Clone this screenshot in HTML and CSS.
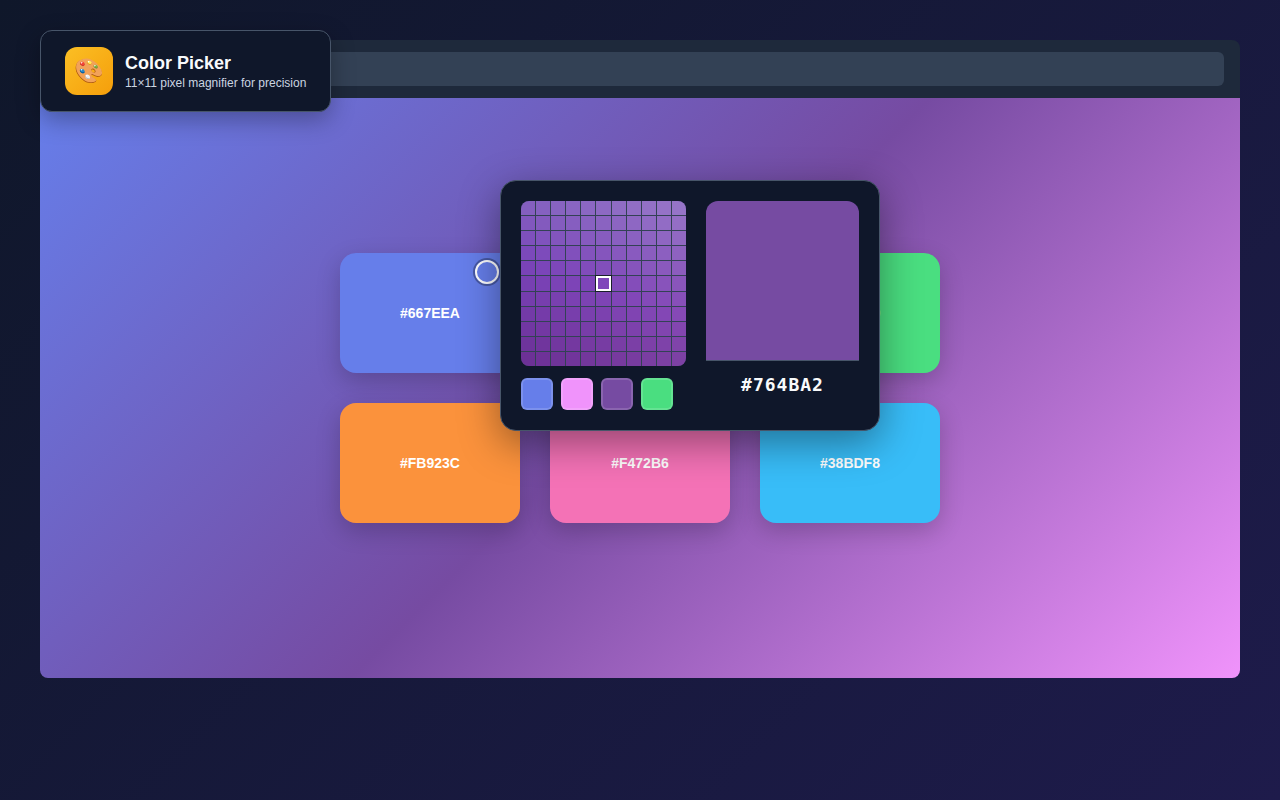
FILE: index.html
```html
<!DOCTYPE html>
<html lang="en">
<head>
    <meta charset="UTF-8">
    <meta name="viewport" content="width=device-width, initial-scale=1.0">
    <title>Color Picker</title>
    <link rel="stylesheet" href="styles.css">
</head>
<body>

    <main class="browser">
        <div class="toolbar">
            <input class="address-bar" type="text" aria-label="Address">
        </div>
        <div class="content">
            <div class="color-grid">
                <div class="color-box blue">#667EEA</div>
                <div class="color-box pink">#F093FB</div>
                <div class="color-box green">#4ADE80</div>
                <div class="color-box orange">#FB923C</div>
                <div class="color-box rose">#F472B6</div>
                <div class="color-box sky">#38BDF8</div>
            </div>
        </div>
    </main>

    <header class="label">
        <div class="label-icon">🎨</div>
        <div>
            <h1>Color Picker</h1>
            <p>11×11 pixel magnifier for precision</p>
        </div>
    </header>

    <div class="cursor"></div>

    <section class="picker">
        <div class="picker-left">
            <div class="magnifier" id="magnifier"></div>
            <div class="history">
                <button class="swatch blue" aria-label="#667EEA"></button>
                <button class="swatch pink" aria-label="#F093FB"></button>
                <button class="swatch purple" aria-label="#764BA2"></button>
                <button class="swatch green" aria-label="#4ADE80"></button>
            </div>
        </div>
        <div class="preview">
            <div class="preview-color"></div>
            <div class="preview-hex">#764BA2</div>
        </div>
    </section>

    <script>
        const magnifier = document.getElementById("magnifier");
        const size = 11;

        for (let y = 0; y < size; y++) {
            for (let x = 0; x < size; x++) {
                const pixel = document.createElement("div");
                const h = 263 + y * 1.2 + x * 0.15;
                const s = 43 + y * 0.8 - x * y * 0.08;
                const l = 56 - y * 1.7 + x * 0.6;
                pixel.className = "pixel";
                pixel.style.backgroundColor = `hsl(${h}, ${s}%, ${l}%)`;
                if (x === 5 && y === 5) {
                    pixel.classList.add("center");
                }
                magnifier.appendChild(pixel);
            }
        }
    </script>

</body>
</html>
```
FILE: styles.css
```css
* {
    margin: 0;
    padding: 0;
    box-sizing: border-box;
}
body {
    font-family: "Liberation Sans", Arial, sans-serif;
    background: linear-gradient(135deg, #0f172a 0%, #1e1b4b 100%);
    min-height: 100vh;
    padding: 40px;
    position: relative;
}
.browser {
    border-radius: 8px;
    overflow: hidden;
}
.toolbar {
    background: #1e293b;
    padding: 12px 16px;
}
.address-bar {
    display: block;
    width: 100%;
    height: 34px;
    background: #334155;
    border: none;
    border-radius: 6px;
}
.content {
    display: flex;
    justify-content: center;
    align-items: center;
    min-height: 580px;
    background: linear-gradient(135deg, #667eea 0%, #764ba2 50%, #f093fb 100%);
}
.color-grid {
    display: grid;
    grid-template-columns: repeat(3, 180px);
    gap: 30px;
}
.color-box {
    display: flex;
    justify-content: center;
    align-items: center;
    height: 120px;
    border-radius: 16px;
    box-shadow: 0 8px 24px rgba(0, 0, 0, 0.2);
    color: white;
    font-size: 14px;
    font-weight: bold;
}
.blue {
    background: #667eea;
}
.pink {
    background: #f093fb;
}
.purple {
    background: #764ba2;
}
.green {
    background: #4ade80;
}
.orange {
    background: #fb923c;
}
.rose {
    background: #f472b6;
}
.sky {
    background: #38bdf8;
}
.label {
    position: absolute;
    top: 30px;
    left: 40px;
    display: flex;
    align-items: center;
    gap: 12px;
    padding: 16px 24px;
    background: #0f172a;
    border: 1px solid #475569;
    border-radius: 12px;
    box-shadow: 0 8px 24px rgba(0, 0, 0, 0.3);
}
.label-icon {
    display: flex;
    justify-content: center;
    align-items: center;
    width: 48px;
    height: 48px;
    border-radius: 12px;
    background: linear-gradient(135deg, #fbbf24, #f59e0b);
    font-size: 24px;
}
.label h1 {
    color: #f8fafc;
    font-size: 18px;
    margin-bottom: 2px;
}
.label p {
    color: #cbd5e1;
    font-size: 12px;
}
.cursor {
    position: absolute;
    top: 260px;
    left: 475px;
    width: 24px;
    height: 24px;
    border: 2px solid white;
    border-radius: 50%;
    box-shadow: 0 0 0 2px rgba(0, 0, 0, 0.3);
}
.picker {
    position: absolute;
    top: 180px;
    left: 500px;
    display: flex;
    gap: 20px;
    width: 380px;
    padding: 20px;
    background: #0f172a;
    border: 1px solid #475569;
    border-radius: 16px;
    box-shadow: 0 12px 40px rgba(0, 0, 0, 0.4);
}
.magnifier {
    display: grid;
    grid-template-columns: repeat(11, 1fr);
    grid-template-rows: repeat(11, 1fr);
    gap: 1px;
    width: 165px;
    height: 165px;
    background: #334155;
    border-radius: 8px;
    overflow: hidden;
}
.center {
    z-index: 1;
    border: 2px solid white;
    box-shadow: 0 0 0 1px rgba(0, 0, 0, 0.5);
}
.history {
    display: flex;
    gap: 8px;
    margin-top: 12px;
}
.swatch {
    width: 32px;
    height: 32px;
    border: 2px solid rgba(255, 255, 255, 0.15);
    border-radius: 6px;
    cursor: pointer;
}
.preview {
    flex: 1;
    border-radius: 12px;
    overflow: hidden;
}
.preview-color {
    height: 160px;
    background: #764ba2;
    border-bottom: 1px solid #475569;
}
.preview-hex {
    padding: 13px 0;
    color: #f8fafc;
    font-family: "DejaVu Sans Mono", monospace;
    font-size: 18px;
    font-weight: bold;
    letter-spacing: 1px;
    text-align: center;
}
```
